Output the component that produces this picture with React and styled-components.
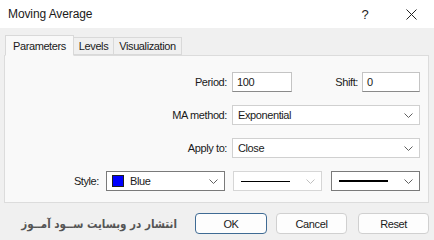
import React from 'react';
import styled, { createGlobalStyle } from 'styled-components';

const GlobalStyle = createGlobalStyle`
    html, body {
        margin: 0;
        padding: 0;
        background: #f0f0f0;
    }
    body {
        font-family: 'Liberation Sans', Arial, sans-serif;
        font-size: 11px;
        letter-spacing: -0.4px;
        color: #1a1a1a;
    }
`;

const Window = styled.div`
    width: 434px;
    height: 240px;
    display: flex;
    flex-direction: column;
    background: #f0f0f0;
    overflow: hidden;
`;

const TitleBar = styled.div`
    height: 28px;
    flex: none;
    display: flex;
    align-items: center;
    background: #ffffff;
    padding-left: 8px;
`;

const Title = styled.div`
    flex: 1;
    font-size: 12px;
    letter-spacing: -0.1px;
    color: #1a1a1a;
`;

const TitleButton = styled.div`
    width: 46px;
    height: 28px;
    display: flex;
    align-items: center;
    justify-content: center;
    font-size: 13px;
    color: #222;
`;

const Body = styled.div`
    padding: 6px 5px 0 4px;
    display: flex;
    flex-direction: column;
`;

const Tabs = styled.div`
    display: flex;
    align-items: flex-end;
    height: 21px;
    padding-left: 1px;
    position: relative;
    z-index: 1;
`;

const Tab = styled.div`
    height: ${props => props.active ? '21px' : '18px'};
    padding: 0 ${props => props.active ? '7px' : '5px'};
    display: flex;
    align-items: center;
    box-sizing: border-box;
    border: 1px solid #d9d9d9;
    border-bottom: ${props => props.active ? '1px solid #f9f9f9' : '1px solid #d9d9d9'};
    border-left: ${props => props.first ? '1px solid #d9d9d9' : props.active ? '1px solid #d9d9d9' : '0'};
    background: ${props => props.active ? '#f9f9f9' : '#f0f0f0'};
    margin-bottom: ${props => props.active ? '-1px' : '0'};
    color: #1a1a1a;
`;

const Panel = styled.div`
    height: 148px;
    box-sizing: border-box;
    border: 1px solid #dcdcdc;
    background: #f9f9f9;
    padding: 16px 8px 0 0;
    display: flex;
    flex-direction: column;
    gap: 13px;
`;

const Row = styled.div`
    display: flex;
    align-items: center;
    justify-content: flex-end;
    height: 20px;
`;

const Label = styled.div`
    width: ${props => props.width || 'auto'};
    text-align: right;
    margin-right: ${props => props.gap || 5}px;
    white-space: nowrap;
`;

const TextInput = styled.div`
    width: ${props => props.width}px;
    height: 20px;
    box-sizing: border-box;
    border: 1px solid #c4c4c4;
    border-bottom-color: #8a8a8a;
    background: #ffffff;
    display: flex;
    align-items: center;
    padding-left: 4px;
`;

const Select = styled.div`
    width: ${props => props.width}px;
    height: 20px;
    box-sizing: border-box;
    border: 1px solid ${props => props.dark ? '#7a7a7a' : props.disabled ? '#d6d6d6' : '#d0d0d0'};
    background: #ffffff;
    display: flex;
    align-items: center;
    padding: 0 6px 0 5px;
    margin-left: ${props => props.ml || 0}px;
    gap: 6px;
`;

const SelectValue = styled.div`
    flex: 1;
    display: flex;
    align-items: center;
    gap: 6px;
    min-width: 0;
`;

const Swatch = styled.div`
    width: 12px;
    height: 12px;
    background: #0000ff;
    border: 1px solid #202020;
    box-sizing: border-box;
`;

const LineSample = styled.div`
    flex: 1;
    height: ${props => props.thick}px;
    background: #000;
    margin: 0 10px 0 2px;
`;

const Footer = styled.div`
    display: flex;
    align-items: center;
    height: 21px;
    margin-top: 10px;
    padding-left: 10px;
`;

const Watermark = styled.div`
    flex: 1;
    min-width: 0;
    font-family: 'DejaVu Sans Condensed', 'DejaVu Sans', sans-serif;
    font-weight: bold;
    font-size: 11.5px;
    letter-spacing: 0;
    color: #555555;
    direction: rtl;
    text-align: right;
    white-space: nowrap;
    padding-right: 18px;
`;

const Button = styled.div`
    flex: none;
    width: ${props => props.width}px;
    height: 21px;
    box-sizing: border-box;
    margin-left: ${props => props.ml || 0}px;
    border: 1px solid ${props => props.primary ? '#3f6b94' : '#d0d0d0'};
    border-radius: 4px;
    background: #fdfdfd;
    display: flex;
    align-items: center;
    justify-content: center;
    color: #1a1a1a;
`;

const Chevron = ({ light }) => (
    <svg width="9" height="5" viewBox="0 0 9 5">
        <path d="M0.5 0.5 L4.5 4.5 L8.5 0.5" fill="none" stroke={light ? '#c0c0c0' : '#606060'} strokeWidth="1" />
    </svg>
);

const CloseIcon = () => (
    <svg width="11" height="11" viewBox="0 0 11 11">
        <path d="M0.5 0.5 L10.5 10.5 M10.5 0.5 L0.5 10.5" stroke="#222" strokeWidth="1" />
    </svg>
);

export default function App() {
    return (
        <Window>
            <GlobalStyle />
            <TitleBar>
                <Title>Moving Average</Title>
                <TitleButton>?</TitleButton>
                <TitleButton><CloseIcon /></TitleButton>
            </TitleBar>
            <Body>
                <Tabs>
                    <Tab active first>Parameters</Tab>
                    <Tab>Levels</Tab>
                    <Tab>Visualization</Tab>
                </Tabs>
                <Panel>
                    <Row>
                        <Label>Period:</Label>
                        <TextInput width={60}>100</TextInput>
                        <Label width="66px" gap={4}>Shift:</Label>
                        <TextInput width={58}>0</TextInput>
                    </Row>
                    <Row>
                        <Label>MA method:</Label>
                        <Select width={188}>
                            <SelectValue>Exponential</SelectValue>
                            <Chevron />
                        </Select>
                    </Row>
                    <Row>
                        <Label>Apply to:</Label>
                        <Select width={188}>
                            <SelectValue>Close</SelectValue>
                            <Chevron />
                        </Select>
                    </Row>
                    <Row>
                        <Label gap={7}>Style:</Label>
                        <Select width={119} dark>
                            <SelectValue><Swatch />Blue</SelectValue>
                            <Chevron />
                        </Select>
                        <Select width={89} ml={8} disabled>
                            <LineSample thick={1} />
                            <Chevron light />
                        </Select>
                        <Select width={89} ml={9} dark>
                            <LineSample thick={2} />
                            <Chevron />
                        </Select>
                    </Row>
                </Panel>
                <Footer>
                    <Watermark>انتشار در وبسایت ســود آمــوز</Watermark>
                    <Button width={72} primary>OK</Button>
                    <Button width={71} ml={9}>Cancel</Button>
                    <Button width={71} ml={11}>Reset</Button>
                </Footer>
            </Body>
        </Window>
    );
}
